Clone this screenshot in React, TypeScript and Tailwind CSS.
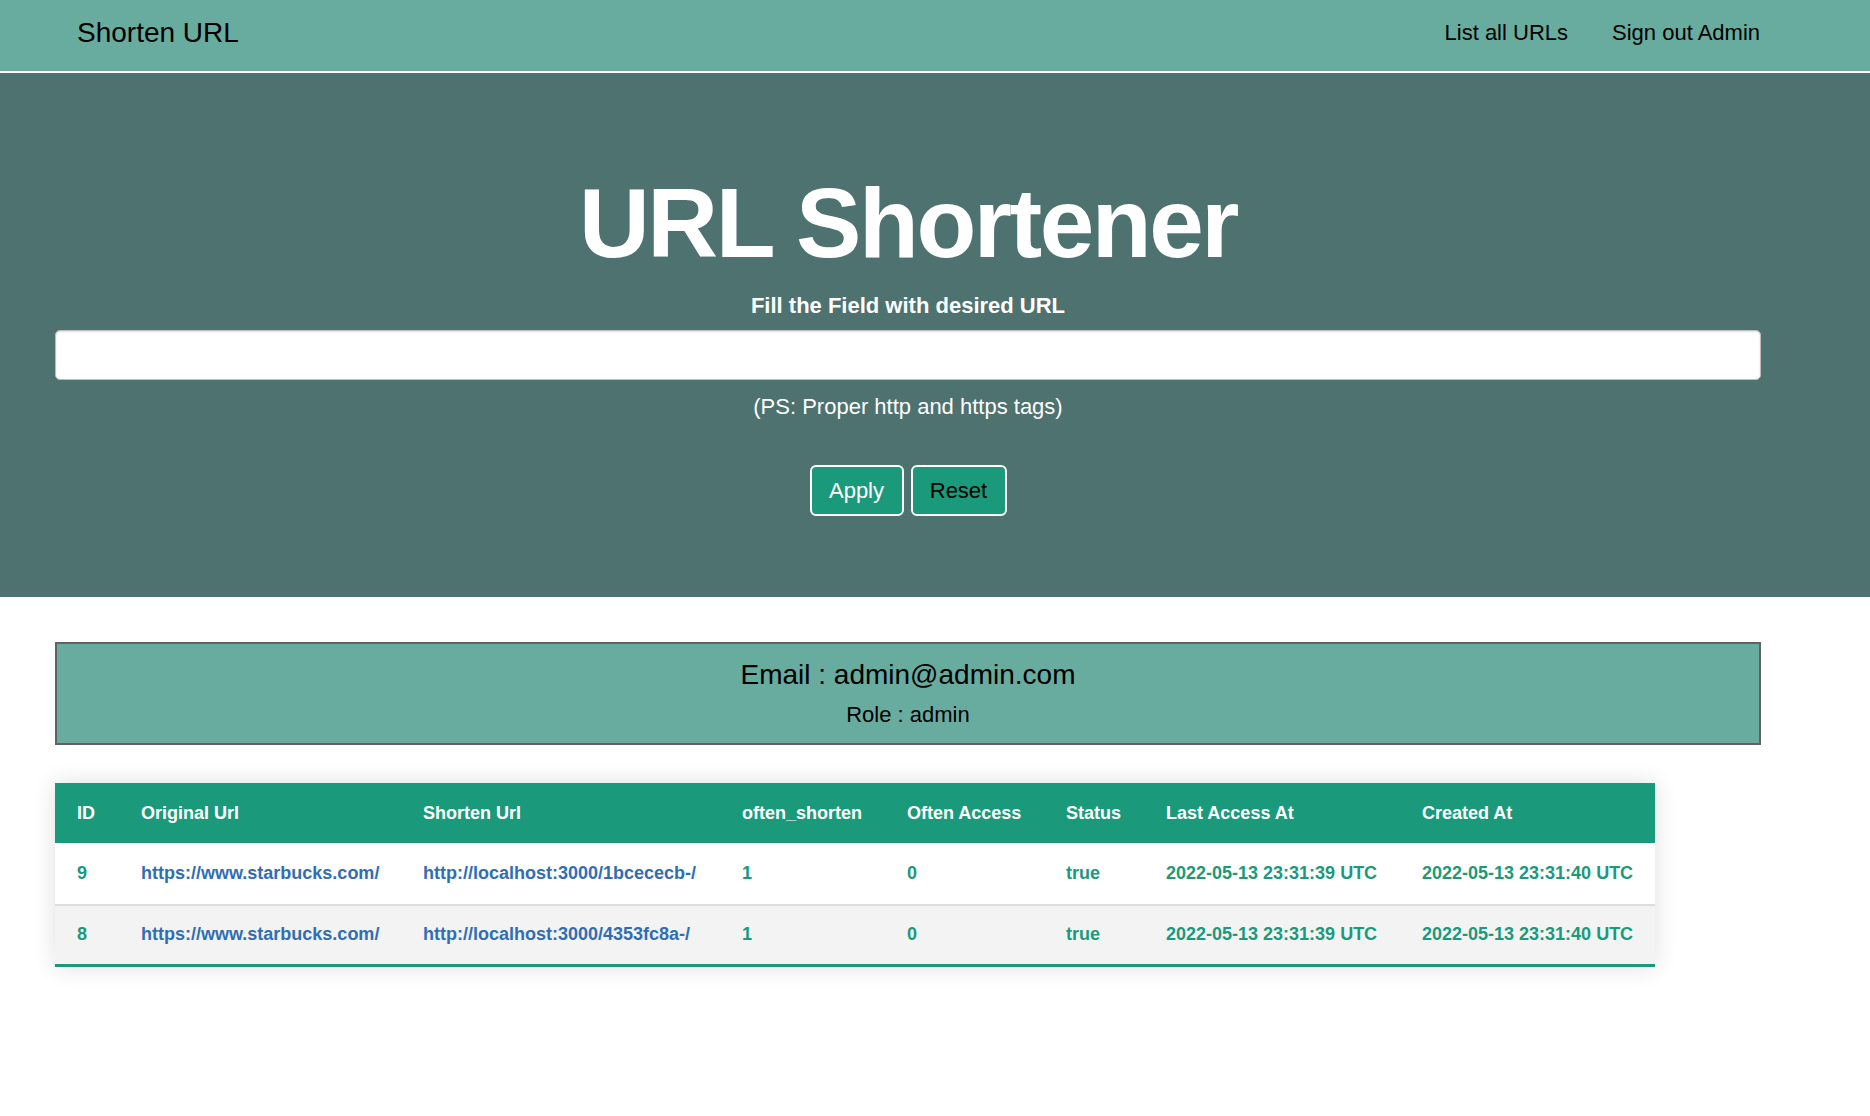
import React, { useState } from 'react'

type UrlRow = {
    id: number
    original: string
    shorten: string
    oftenShorten: number
    oftenAccess: number
    status: string
    lastAccess: string
    createdAt: string
}

const rows: UrlRow[] = [
    {
        id: 9,
        original: 'https://www.starbucks.com/',
        shorten: 'http://localhost:3000/1bcececb-/',
        oftenShorten: 1,
        oftenAccess: 0,
        status: 'true',
        lastAccess: '2022-05-13 23:31:39 UTC',
        createdAt: '2022-05-13 23:31:40 UTC',
    },
    {
        id: 8,
        original: 'https://www.starbucks.com/',
        shorten: 'http://localhost:3000/4353fc8a-/',
        oftenShorten: 1,
        oftenAccess: 0,
        status: 'true',
        lastAccess: '2022-05-13 23:31:39 UTC',
        createdAt: '2022-05-13 23:31:40 UTC',
    },
]

export default function App() {
    const [url, setUrl] = useState('')

    return (
        <div className="min-h-screen bg-white font-['Liberation_Sans',Arial,sans-serif] text-black">
            {/* Navbar */}
            <nav className="h-[73px] bg-[#67ac9f] border-b-2 border-white">
                <div className="ml-[55px] w-[1706px] h-full pl-[22px] pb-[5px] flex items-center justify-between">
                    <a href="#" className="text-[28px] leading-none text-black">Shorten URL</a>
                    <div className="flex items-center gap-[44px] text-[22px] leading-none">
                        <a href="#" className="text-black">List all URLs</a>
                        <a href="#" className="text-black pr-px">Sign out Admin</a>
                    </div>
                </div>
            </nav>

            {/* Hero */}
            <section className="bg-[#4d7270] pt-[101px] pb-[81px]">
                <div className="ml-[55px] w-[1706px] flex flex-col items-center">
                    <h1 className="text-[98px] leading-none font-bold tracking-[-0.025em] text-white">URL Shortener</h1>
                    <p className="mt-[21px] text-[22px] leading-[25px] font-bold text-white">Fill the Field with desired URL</p>
                    <input
                        type="text"
                        value={url}
                        onChange={(e) => setUrl(e.target.value)}
                        className="mt-[12px] w-full h-[50px] rounded-[5px] border border-[#bdbdbd] bg-white px-3 text-[20px] shadow-[inset_0_1px_2px_rgba(0,0,0,0.12)] focus:outline-none"
                    />
                    <p className="mt-[14px] text-[22px] leading-[25px] text-white">(PS: Proper http and https tags)</p>
                    <div className="mt-[46px] flex gap-[7px]">
                        <button className="w-[94px] h-[51px] rounded-[6px] border-2 border-white bg-[#1a9a7b] text-white text-[22px]">Apply</button>
                        <button onClick={() => setUrl('')} className="w-[96px] h-[51px] rounded-[6px] border-2 border-white bg-[#1a9a7b] text-black text-[22px]">Reset</button>
                    </div>
                </div>
            </section>

            <main className="ml-[55px] w-[1706px] pt-[45px] pb-20">
                {/* User info */}
                <div className="h-[103px] border-2 border-[#626262] bg-[#67ac9f] flex flex-col items-center pt-[15px]">
                    <p className="text-[28px] leading-[32px]">Email : admin@admin.com</p>
                    <p className="mt-[11px] text-[22px] leading-[25px]">Role : admin</p>
                </div>

                {/* URLs table */}
                <div className="mt-[38px] w-[1600px] shadow-[0_0_22px_rgba(0,0,0,0.13)]">
                    <table className="w-full table-fixed border-collapse text-left text-[18px] font-bold">
                        <thead>
                            <tr className="bg-[#1a9a7b] text-white h-[60px]">
                                <th className="w-[64px] pl-[22px] font-bold">ID</th>
                                <th className="w-[282px] pl-[22px] font-bold">Original Url</th>
                                <th className="w-[319px] pl-[22px] font-bold">Shorten Url</th>
                                <th className="w-[165px] pl-[22px] font-bold">often_shorten</th>
                                <th className="w-[159px] pl-[22px] font-bold">Often Access</th>
                                <th className="w-[100px] pl-[22px] font-bold">Status</th>
                                <th className="w-[256px] pl-[22px] font-bold">Last Access At</th>
                                <th className="w-[255px] pl-[22px] font-bold">Created At</th>
                            </tr>
                        </thead>
                        <tbody>
                            {rows.map((row, i) => (
                                <tr
                                    key={row.id}
                                    className={
                                        i === rows.length - 1
                                            ? 'h-[60px] bg-[#f3f3f3] border-b-[3px] border-[#1a9a7b] text-[#1a9a7b]'
                                            : 'h-[62px] bg-white border-b-2 border-[#dddddd] text-[#1a9a7b]'
                                    }
                                >
                                    <td className="pl-[22px]">{row.id}</td>
                                    <td className="pl-[22px] whitespace-nowrap">
                                        <a href="#" className="text-[#2f6eb5]">{row.original}</a>
                                    </td>
                                    <td className="pl-[22px] whitespace-nowrap">
                                        <a href="#" className="text-[#2f6eb5]">{row.shorten}</a>
                                    </td>
                                    <td className="pl-[22px]">{row.oftenShorten}</td>
                                    <td className="pl-[22px]">{row.oftenAccess}</td>
                                    <td className="pl-[22px]">{row.status}</td>
                                    <td className="pl-[22px] whitespace-nowrap">{row.lastAccess}</td>
                                    <td className="pl-[22px] whitespace-nowrap">{row.createdAt}</td>
                                </tr>
                            ))}
                        </tbody>
                    </table>
                </div>
            </main>
        </div>
    )
}
